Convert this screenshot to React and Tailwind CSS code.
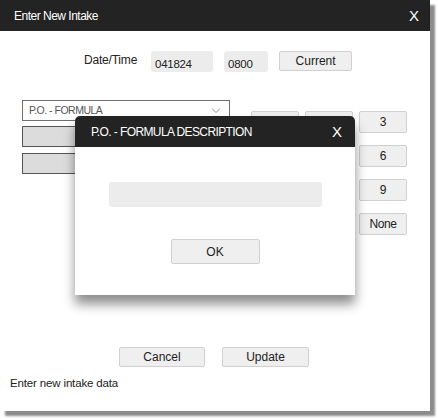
// only the right column of the keypad shows past the dialog
const keypad = ["", "", "3", "", "", "6", "", "", "9", null, "", "None"];

function GrayButton({ className = "", children }) {
  return (
    <button
      className={`bg-[#efefef] border border-[#d0d0d0] rounded-[2px] text-[12px] text-[#222] leading-none ${className}`}
    >
      {children}
    </button>
  );
}

function FormulaDialog() {
  return (
    <div className="absolute left-[75px] top-[116px] w-[280px] h-[179px] bg-white rounded-t-[5px] shadow-[0_9px_12px_rgba(0,0,0,0.45)] flex flex-col">
      <div className="h-[31px] bg-[#232323] rounded-t-[5px] flex items-center justify-between pl-[16px] pr-[13px] text-white">
        <span className="text-[12px] tracking-[-0.6px]">P.O. - FORMULA DESCRIPTION</span>
        <span className="text-[15px] leading-none">X</span>
      </div>
      <div className="flex flex-col items-center pt-[35px]">
        <div className="w-[213px] h-[25px] bg-[#ececec] rounded-[3px]" />
        <GrayButton className="mt-[32px] w-[89px] h-[25px] text-[11.5px]">OK</GrayButton>
      </div>
    </div>
  );
}

export default function App() {
  return (
    <div className="w-[438px] h-[419px] bg-white" style={{ fontFamily: '"Liberation Sans", Arial, sans-serif' }}>
      <div className="relative w-[430px] h-[411px] bg-white shadow-[5px_5px_2px_rgba(0,0,0,0.45)] flex flex-col">
        <div className="h-[31px] bg-[#232323] flex items-center justify-between pl-[14px] pr-[11px] text-white">
          <span className="text-[12px] tracking-[-0.5px]">Enter New Intake</span>
          <span className="text-[15px] leading-none">X</span>
        </div>

        <div className="flex items-center mt-[20px] ml-[84px]">
          <span className="text-[12px] text-[#222] mb-[3px] tracking-[-0.2px]">Date/Time</span>
          <div className="ml-[14px] w-[62px] h-[21px] bg-[#ececec] rounded-[3px] text-[11.5px] text-[#222] flex items-center pl-[4px] pt-[7px] tracking-[-0.3px]">041824</div>
          <div className="ml-[11px] w-[44px] h-[21px] bg-[#ececec] rounded-[3px] text-[11.5px] text-[#222] flex items-center pl-[4px] pt-[7px] tracking-[-0.3px]">0800</div>
          <GrayButton className="ml-[11px] w-[73px] h-[20px] -mt-[2px]">Current</GrayButton>
        </div>

        <div className="flex mt-[28px] ml-[22px]">
          <div className="flex flex-col w-[208px]">
            <div className="h-[21px] border border-[#6f6f6f] bg-white flex items-center justify-between pl-[6px] pr-[8px]">
              <span className="text-[10.5px] text-[#555] tracking-[-0.5px]">P.O. - FORMULA</span>
              <svg width="10" height="6" viewBox="0 0 10 6" fill="none" stroke="#888" strokeWidth="1">
                <path d="M1 0.5 L5 4.5 L9 0.5" />
              </svg>
            </div>
            <div className="mt-[5px] h-[21px] border border-[#555] bg-[#dcdcdc]" />
            <div className="mt-[6px] h-[21px] border border-[#555] bg-[#dcdcdc]" />
          </div>

          <div className="ml-[21px] mt-[11px] grid grid-cols-[48px_48px_48px] gap-x-[6px] gap-y-[12px] h-fit">
            {keypad.map((k, i) =>
              k === null ? (
                <div key={i} />
              ) : (
                <GrayButton key={i} className="h-[22px] tracking-[-0.4px]">
                  {k}
                </GrayButton>
              )
            )}
          </div>
        </div>

        <div className="flex-1" />

        <div className="flex ml-[119px] gap-[17px]">
          <GrayButton className="w-[86px] h-[20px]">Cancel</GrayButton>
          <GrayButton className="w-[87px] h-[20px]">Update</GrayButton>
        </div>
        <div className="ml-[10px] mt-[8px] mb-[19px] text-[11.5px] text-[#222] tracking-[-0.15px]">Enter new intake data</div>

        <FormulaDialog />
      </div>
    </div>
  );
}
